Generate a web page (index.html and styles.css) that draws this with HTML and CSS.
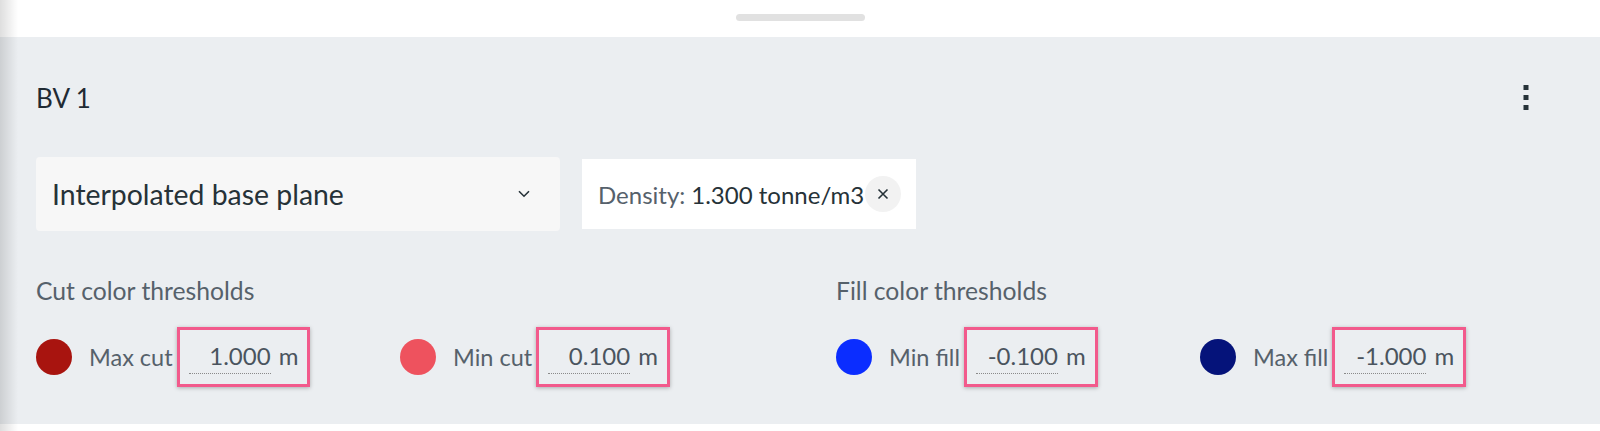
FILE: index.html
```html
<!DOCTYPE html>
<html lang="en">
<head>
<meta charset="utf-8">
<title>BV 1</title>
<link rel="stylesheet" href="styles.css">
</head>
<body>
<div class="sheet">
  <div class="grabber"><span class="handle"></span></div>
  <section class="panel">
    <header class="panel-head">
      <h2 class="panel-title">BV 1</h2>
      <button class="kebab" aria-label="More">
        <svg width="6" height="26" viewBox="0 0 6 26"><rect x="0.5" y="0" width="5" height="5" fill="#263238"/><rect x="0.5" y="10" width="5" height="5" fill="#263238"/><rect x="0.5" y="20" width="5" height="5" fill="#263238"/></svg>
      </button>
    </header>
    <div class="filters">
      <div class="select">
        <span class="select-text">Interpolated base plane</span>
        <svg class="chevron" width="12" height="8" viewBox="0 0 12 8"><path d="M1 1.2 L6 6.2 L11 1.2" fill="none" stroke="#263238" stroke-width="1.6"/></svg>
      </div>
      <div class="chip">
        <span class="chip-key">Density:</span><span class="chip-val">1.300 tonne/m3</span>
        <button class="chip-x" aria-label="Remove">
          <svg width="12" height="12" viewBox="0 0 12 12"><path d="M1.5 1.5 L10.5 10.5 M10.5 1.5 L1.5 10.5" stroke="#263238" stroke-width="1.6"/></svg>
        </button>
      </div>
    </div>
    <div class="thresholds">
      <div class="group">
        <div class="group-title">Cut color thresholds</div>
        <div class="items">
          <div class="item"><span class="dot dot-maxcut"></span><span class="item-label">Max cut</span><span class="box"><span class="field">1.000</span><span class="unit">m</span></span></div>
          <div class="item"><span class="dot dot-mincut"></span><span class="item-label">Min cut</span><span class="box"><span class="field">0.100</span><span class="unit">m</span></span></div>
        </div>
      </div>
      <div class="group">
        <div class="group-title">Fill color thresholds</div>
        <div class="items">
          <div class="item"><span class="dot dot-minfill"></span><span class="item-label">Min fill</span><span class="box"><span class="field">-0.100</span><span class="unit">m</span></span></div>
          <div class="item"><span class="dot dot-maxfill"></span><span class="item-label">Max fill</span><span class="box"><span class="field">-1.000</span><span class="unit">m</span></span></div>
        </div>
      </div>
    </div>
  </section>
</div>
<div class="edge-shadow"></div>
</body>
</html>
```
FILE: styles.css
```css
* { box-sizing: border-box; }
html, body {
  margin: 0;
  padding: 0;
  background: #ffffff;
  height: 431px;
  overflow: hidden;
}
body {
  font-family: Lato, "Liberation Sans", sans-serif;
  color: #263238;
  position: relative;
}
.sheet {
  display: flex;
  flex-direction: column;
  height: 431px;
}
.grabber {
  height: 37px;
  display: flex;
  justify-content: center;
  padding-top: 14px;
}
.handle {
  width: 129px;
  height: 7px;
  border-radius: 4px;
  background: #e1e1e1;
}
.panel {
  height: 387px;
  background: #ebeef1;
  padding: 0 62px 0 36px;
  display: flex;
  flex-direction: column;
}
.panel-head {
  margin-top: 40px;
  height: 42px;
  display: flex;
  align-items: center;
  justify-content: space-between;
}
.panel-title {
  margin: 0;
  font-size: 26px;
  font-weight: 400;
  color: #1f2a33;
}
.kebab {
  width: 24px;
  height: 30px;
  border: 0;
  background: transparent;
  padding: 0;
  display: flex;
  align-items: center;
  justify-content: center;
}
.filters {
  margin-top: 38px;
  height: 74px;
  display: flex;
  align-items: center;
  gap: 22px;
}
.select {
  width: 524px;
  height: 74px;
  background: #f7f7f7;
  border-radius: 4px;
  display: flex;
  align-items: center;
  justify-content: space-between;
  padding: 0 30px 0 16px;
}
.select-text {
  font-size: 28.4px;
  color: #263238;
}
.chip {
  height: 70px;
  background: #ffffff;
  display: flex;
  align-items: center;
  padding: 0 15px 0 16px;
  font-size: 24px;
}
.chip-key {
  color: #56616b;
  margin-right: 6px;
}
.chip-val {
  color: #263238;
}
.chip-x {
  width: 36px;
  height: 36px;
  border-radius: 50%;
  border: 0;
  background: #f2f2f2;
  display: flex;
  align-items: center;
  justify-content: center;
  padding: 0;
  margin-left: 1px;
}
.thresholds {
  margin-top: 47px;
  display: grid;
  grid-template-columns: 800px 1fr;
}
.group-title {
  font-size: 24.7px;
  line-height: 26px;
  color: #56616b;
}
.items {
  margin-top: 23px;
  display: grid;
  grid-template-columns: 364px 364px;
}
.item {
  height: 60px;
  display: flex;
  align-items: center;
}
.dot {
  width: 36px;
  height: 36px;
  border-radius: 50%;
  flex: none;
}
.dot-maxcut { background: #a8140f; }
.dot-mincut { background: #ee525e; }
.dot-minfill { background: #0b2dff; }
.dot-maxfill { background: #05137a; }
.item-label {
  margin-left: 17px;
  font-size: 23.5px;
  color: #56616b;
}
.box {
  margin-left: 4px;
  height: 60px;
  border: 3px solid #f25a8c;
  box-shadow: 0 1px 4px rgba(0, 0, 0, 0.28);
  display: flex;
  align-items: center;
  padding: 2px 9px 0 9px;
  font-size: 24px;
  color: #4a545e;
}
.field {
  width: 82px;
  text-align: right;
  line-height: 28px;
  padding-bottom: 3px;
  border-bottom: 1px dotted #8a8a8a;
}
.unit {
  margin-left: 8px;
  line-height: 28px;
  padding-bottom: 4px;
}
.edge-shadow {
  position: absolute;
  left: 0;
  top: 0;
  width: 18px;
  height: 431px;
  background: linear-gradient(to right, rgba(0, 0, 0, 0.13), rgba(0, 0, 0, 0));
  pointer-events: none;
}
```
